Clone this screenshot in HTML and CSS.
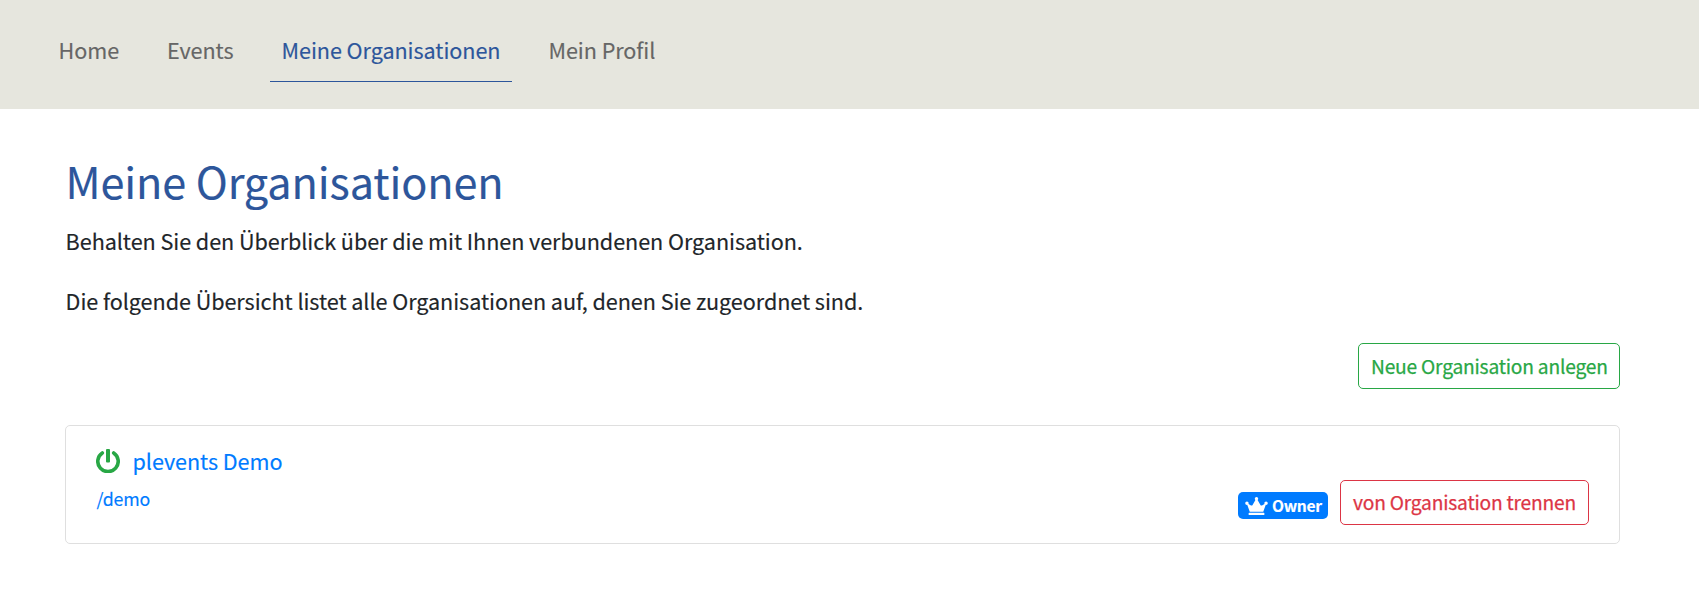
FILE: index.html
```html
<!DOCTYPE html>
<html lang="de">
<head>
<meta charset="utf-8">
<title>Meine Organisationen</title>
<link rel="stylesheet" href="styles.css">
</head>
<body>
<nav class="navbar">
  <a class="nav-link nav-home">Home</a>
  <a class="nav-link nav-events">Events</a>
  <a class="nav-link nav-orgs active">Meine Organisationen</a>
  <a class="nav-link nav-profile">Mein Profil</a>
</nav>
<main class="content">
  <h1 class="title"><span>Meine Organisationen</span></h1>
  <p class="text"><span class="intro">Behalten Sie den Überblick über die mit Ihnen verbundenen Organisation.</span></p>
  <p class="text"><span class="overview">Die folgende Übersicht listet alle Organisationen auf, denen Sie zugeordnet sind.</span></p>
  <div class="toolbar"><button class="btn btn-success">Neue Organisation anlegen</button></div>
  <section class="card">
    <div class="info">
      <div class="name">
        <svg class="power" viewBox="0 0 24 24"><path d="M6.3 3.9A10.2 10.2 0 1 0 17.7 3.9" fill="none" stroke="currentColor" stroke-width="3.6" stroke-linecap="round"/><rect x="10" y="0" width="4" height="13.5" rx="1" fill="currentColor"/></svg>
        <a class="org">plevents Demo</a>
      </div>
      <a class="slug">/demo</a>
    </div>
    <div class="actions">
      <span class="badge"><svg class="crown" viewBox="0 0 640 512"><path fill="currentColor" d="M528 448H112c-8.800 0-16 7.200-16 16v32c0 8.800 7.200 16 16 16h416c8.800 0 16-7.200 16-16v-32c0-8.800-7.200-16-16-16zm64-320c-26.500 0-48 21.500-48 48 0 7.100 1.600 13.700 4.400 19.800L476 239.200c-15.400 9.200-35.300 4-44.200-11.600L350.300 85C361 76.200 368 63 368 48c0-26.500-21.500-48-48-48s-48 21.500-48 48c0 15 7 28.200 17.700 37l-81.500 142.600c-8.900 15.600-28.900 20.800-44.200 11.600l-72.300-43.400c2.700-6 4.400-12.700 4.400-19.800 0-26.500-21.500-48-48-48S0 149.500 0 176s21.500 48 48 48c2.600 0 5.200-.4 7.700-.8L128 416h384l72.300-192.800c2.500.4 5.100.8 7.700.8 26.500 0 48-21.500 48-48s-21.500-48-48-48z"/></svg><span>Owner</span></span>
      <button class="btn btn-danger">von Organisation trennen</button>
    </div>
  </section>
</main>
</body>
</html>
```
FILE: styles.css
```css
* { box-sizing: border-box; }
body {
  margin: 0;
  background: #fff;
  color: #212529;
  font-family: "Noto Sans CJK SC", "Noto Sans", sans-serif;
  font-size: 21.6px;
  letter-spacing: -0.055px;
  line-height: 36px;
  -webkit-text-stroke: 0.15px currentColor;
}
.navbar {
  display: flex;
  align-items: flex-start;
  gap: 24px;
  height: 109px;
  padding: 20px 46.5px;
  background: #e6e6de;
}
.nav-link {
  height: 62px;
  padding: 12px 12px 0;
  color: #666;
  white-space: nowrap;
}
.nav-link.active { color: #2d569b; border-bottom: 1px solid #2d569b; }
.content { padding: 42px 79px 0 65px; }
.title {
  margin: 0 0 14px;
  padding-left: 0.5px;
  color: #2d569b;
  font-size: 43.2px;
  font-weight: 400;
  letter-spacing: -0.1px;
  line-height: 58px;
}
.text { margin: 0 0 24px; padding-left: 0.6px; white-space: nowrap; }
.toolbar { display: flex; justify-content: flex-end; margin-bottom: 36px; }
.btn {
  height: 46px;
  padding: 0 12px 1px;
  border: 1px solid currentColor;
  border-radius: 5px;
  background: transparent;
  font-family: inherit;
  font-size: 19.2px;
  letter-spacing: -0.2px;
  line-height: 40px;
  white-space: nowrap;
  -webkit-text-stroke: 0.25px currentColor;
}
.btn-success { width: 262px; color: #28a745; }
.btn-danger { width: 249px; height: 45px; color: #dc3545; }
.card {
  display: flex;
  justify-content: space-between;
  height: 119px;
  padding: 16px 30px 18px;
  border: 1px solid #dfdfdf;
  border-radius: 5px;
}
.info { color: #007bff; }
.name { display: flex; align-items: center; gap: 12.5px; height: 38px; }
.power { width: 24px; height: 24px; color: #28a745; margin: 0 0 1px; }
.slug { display: block; padding: 1px 0 0 0.6px; line-height: 34px; font-size: 17.8px; letter-spacing: -0.2px; }
.actions { display: flex; align-items: flex-end; gap: 12px; }
.badge {
  display: flex;
  align-items: center;
  gap: 4px;
  width: 90px;
  height: 27px;
  padding: 0 7px;
  margin-bottom: 6px;
  border-radius: 5px;
  background: #007bff;
  color: #fff;
  font-size: 15.6px;
  font-weight: 700;
  letter-spacing: -0.3px;
  line-height: 27px;
}
.crown { width: 23px; height: 18px; flex: none; }
```
